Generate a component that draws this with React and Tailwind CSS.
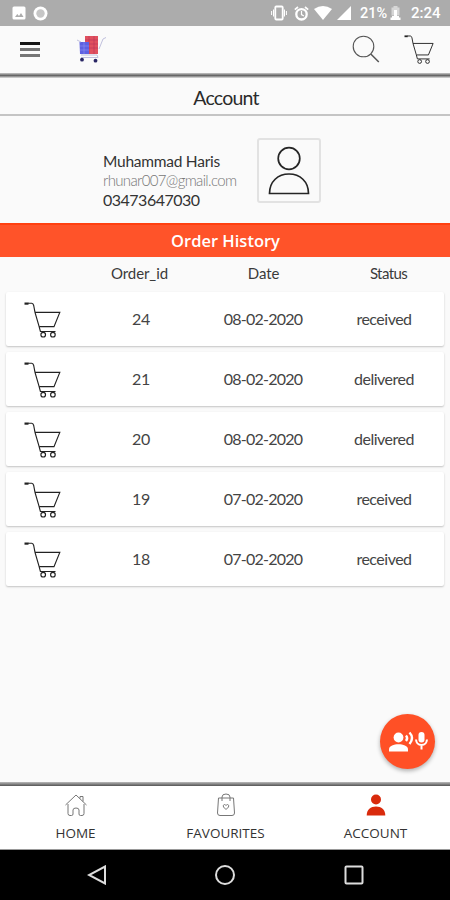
const orders = [
  { id: '24', date: '08-02-2020', status: 'received' },
  { id: '21', date: '08-02-2020', status: 'delivered' },
  { id: '20', date: '08-02-2020', status: 'delivered' },
  { id: '19', date: '07-02-2020', status: 'received' },
  { id: '18', date: '07-02-2020', status: 'received' },
]

function CartIcon({ className }) {
  return (
    <svg viewBox="0 0 38 37" className={className} fill="none" stroke="#222" strokeWidth="1.15">
      <path d="M.5 1.6h4" strokeWidth="2.200" />
      <path d="M4 1.200h3.700q1.500.2 2 2.300l1.300 6.900 4 13.800 1.400 5.300H31.500" />
      <path d="M11 10.400h24.800l-5.800 14.200H15.200" />
      <circle cx="19.200" cy="32.700" r="2.300" />
      <circle cx="28.900" cy="32.700" r="2.300" />
    </svg>
  )
}

function StatusBar() {
  return (
    <div className="h-[26px] bg-[#acacac] flex items-center text-white font-['Roboto',sans-serif]">
      <svg className="w-[14px] h-[14px] ml-3" viewBox="0 0 14 14">
        <rect x=".5" y=".5" width="13" height="13" rx="1.5" fill="#fff" />
        <path d="M3 11l2.3-3 1.7 2 2-3 2.5 4z" fill="#acacac" />
      </svg>
      <svg className="w-[15px] h-[15px] ml-[6.5px]" viewBox="0 0 15 15">
        <circle cx="7.5" cy="7.5" r="7" fill="#fff" />
        <circle cx="7.5" cy="7.5" r="4.2" fill="#c6c6c6" />
      </svg>
      <svg className="w-4 h-4 ml-auto" viewBox="0 0 16 16" fill="none" stroke="#fff" strokeWidth="1.4">
        <rect x="4.3" y="1.5" width="7.4" height="13" rx="1" strokeWidth="1.8" />
        <path d="M2.5 4.5v7M.6 6v4M13.5 4.5v7M15.4 6v4" strokeWidth="1" />
      </svg>
      <svg className="w-[15px] h-[15px] ml-[7px]" viewBox="0 0 15 15" fill="none" stroke="#fff">
        <circle cx="7.5" cy="8.3" r="5.2" strokeWidth="2.3" />
        <path d="M.8 3.6L4 1M14.2 3.6L11 1" strokeWidth="1.7" />
        <path d="M7.5 5v3.6l2.4 1.4" strokeWidth="1.2" />
      </svg>
      <svg className="w-[18px] h-[14px] ml-[5px]" viewBox="0 0 18 14">
        <path d="M0 3Q9-2.800 18 3L9 14z" fill="#fff" />
      </svg>
      <svg className="w-[14px] h-[14px] ml-[5px]" viewBox="0 0 14 14">
        <path d="M14 0v14H0z" fill="#fff" />
      </svg>
      <span className="ml-[9px] w-[27px] text-[14.500px] font-medium leading-none pt-[2px]">21%</span>
      <svg className="w-[11px] h-[14px] ml-[3px]" viewBox="0 0 11 14">
        <path d="M3.500 0h4v1.500h2v8h-8v-8h2z" fill="#d6d6d6" />
        <path d="M.5 11.500h10V14H.5zM4 4h3v6h2v1.500H2V10h2z" fill="#fff" />
      </svg>
      <span className="ml-[10px] mr-[10px] w-[29px] text-[15px] font-medium leading-none pt-[1px]">2:24</span>
    </div>
  )
}

function ShopLogo() {
  return (
    <svg className="w-[30px] h-[28px]" viewBox="0 0 30 28">
      <path d="M8 1h13v18H8z" fill="#e0505e" />
      <path d="M8 5h13M8 9h13M8 13h13M12 1v18M17 1v18" stroke="#b93358" strokeWidth=".6" />
      <path d="M2.500 7h9.500v12H3z" fill="#5d60e2" />
      <path d="M3 11h9M3 15h9M7 7v12" stroke="#8f92f4" strokeWidth=".6" />
      <path d="M0 5l4 2M22 14l4-10 3-1.500M4 20h16l1 2.500H4" fill="none" stroke="#c0c0dd" strokeWidth="1" />
      <circle cx="5" cy="24.700" r="1.900" fill="#292665" />
      <circle cx="18.500" cy="25.700" r="1.900" fill="#292665" />
    </svg>
  )
}

function AppBar() {
  return (
    <header className="h-[47px] bg-[#fafafa] flex items-center">
      <div className="ml-5 w-5 flex flex-col gap-[3px]">
        <div className="h-[3px] bg-[#161616]" />
        <div className="h-[3px] bg-[#757575]" />
        <div className="h-[3px] bg-[#757575]" />
      </div>
      <div className="ml-[37px] pb-[2px]">
        <ShopLogo />
      </div>
      <svg className="w-7 h-7 ml-auto mb-[2px]" viewBox="0 0 28 28" fill="none" stroke="#555" strokeWidth="1.1">
        <circle cx="11.500" cy="11.500" r="10.300" />
        <path d="M18.800 19l8 8" strokeWidth="1.500" />
      </svg>
      <CartIcon className="w-[31px] h-[30px] ml-[24px] mr-[15px]" />
    </header>
  )
}

function Profile() {
  return (
    <section className="h-[107px] flex items-start">
      <div className="ml-[103px] mt-[35px] w-[154px] text-[#333] whitespace-nowrap">
        <p className="text-[15.500px] leading-5 tracking-[-0.25px]">Muhammad Haris</p>
        <p className="text-[15px] leading-[19px] tracking-[-0.65px] text-[#777] font-light">rhunar007@gmail.com</p>
        <p className="text-[16px] leading-5 tracking-[-0.5px]">03473647030</p>
      </div>
      <div className="mt-[22px] w-16 h-[65px] border-2 border-[#e2e2e2] rounded-[3px] flex items-center justify-center">
        <svg className="w-[42px] h-[50px]" viewBox="0 0 42 50" fill="none" stroke="#252525" strokeWidth="1.700">
          <circle cx="21" cy="12.500" r="10.800" />
          <path d="M1.500 47.500C1.500 35.500 10 28 21 28s19.500 7.500 19.500 19.500z" />
        </svg>
      </div>
    </section>
  )
}

function OrderRow({ order }) {
  return (
    <div className="h-[54px] bg-white rounded-[2px] shadow-[0_1px_2px_rgba(0,0,0,0.22)] grid grid-cols-[74px_122px_122px_120px] items-center text-center text-[16px] text-[#444]">
      <CartIcon className="w-[38px] h-[37px] ml-[18px] mt-[2px]" />
      <span className="tracking-[-0.4px]">{order.id}</span>
      <span className="tracking-[-0.75px]">{order.date}</span>
      <span className="tracking-[-0.5px]">{order.status}</span>
    </div>
  )
}

function BottomNav() {
  return (
    <nav className="h-[64px] bg-white border-b border-[#999] grid grid-cols-3 text-center text-[13.500px] text-[#333] font-['Open_Sans',sans-serif]">
      <div className="flex flex-col items-center pt-2 pl-px">
        <svg className="w-[22px] h-[22px]" viewBox="0 0 22 22" fill="none" stroke="#777" strokeWidth="1">
          <path d="M.5 11L11 1l10.500 10M15 4.500V2.500h3v5M3 10v9.500q0 2 2 2h1.500q1.500 0 1.500-1.500v-4q0-2 3-2t3 2v4q0 1.500 1.500 1.500H17q2 0 2-2V10" />
        </svg>
        <span className="leading-5 mt-[7px]">HOME</span>
      </div>
      <div className="flex flex-col items-center pt-[7px] pl-px">
        <svg className="w-[20px] h-[24px]" viewBox="0 0 20 24" fill="none" stroke="#777" strokeWidth="1">
          <path d="M2.500 5h15l1 15q0 2.500-2.500 2.500H4Q1.500 22.500 1.500 20zM6 8V4q0-3 4-3t4 3v4" />
          <path d="M10 16.500l-2.500-2.500q-1-2 1-2.500 1 0 1.500 1 .5-1 1.500-1 2 .5 1 2.500z" />
        </svg>
        <span className="leading-5 mt-[6px]">FAVOURITES</span>
      </div>
      <div className="flex flex-col items-center pt-2 pl-px">
        <svg className="w-[20px] h-[22px]" viewBox="0 0 20 22" fill="#d92a0c">
          <circle cx="10" cy="5.500" r="5" />
          <path d="M.7 21.500c0-6 4-9 9.300-9s9.300 3 9.300 9z" />
        </svg>
        <span className="leading-5 mt-[7px]">ACCOUNT</span>
      </div>
    </nav>
  )
}

function VoiceButton() {
  return (
    <button className="absolute right-[15px] bottom-[13px] w-[55px] h-[55px] rounded-full bg-[#ff5026] shadow-[0_2px_4px_rgba(0,0,0,0.3)] flex items-center justify-center">
      <svg className="w-10 h-[22px]" viewBox="0 0 40 22" fill="#fff">
        <circle cx="10.500" cy="6.500" r="4.900" />
        <path d="M1 20.500v-2.200c0-3.500 5-5 9.500-5s9.500 1.500 9.500 5v2.200z" />
        <path d="M18 4.500q2.300 2.500 0 5.500M21.500 1.500q5 5.300 0 11.500" fill="none" stroke="#fff" strokeWidth="2.400" />
        <rect x="30.500" y="1" width="6" height="10.500" rx="3" />
        <path d="M28 8.500q.5 5.500 5.500 5.500t5.500-5.500M33.500 14v4.500" fill="none" stroke="#fff" strokeWidth="2" />
      </svg>
    </button>
  )
}

function App() {
  return (
    <div className="w-[450px] h-[900px] bg-[#fafafa] flex flex-col overflow-hidden font-['Lato',sans-serif]">
      <StatusBar />
      <AppBar />
      <div className="h-[5px] bg-linear-to-b from-[#c8c8c8] via-[#666] to-[#e2e2e2]" />
      <h1 className="h-[38px] border-b-2 border-[#c4c4c4] flex items-center justify-center text-[19.500px] tracking-[-0.75px] text-[#2a2a2a] pt-[3px] pl-[2px]">Account</h1>
      <Profile />
      <h2 className="h-[34px] border-t-2 border-[#ff4010] bg-[#ff5329] text-white text-[16.500px] font-semibold flex items-center justify-center pl-px font-['Open_Sans',sans-serif]">Order History</h2>
      <div className="h-[34px] pl-[6px] grid grid-cols-[73px_121px_127px_123px] text-center text-[15px] text-[#3a3a3a] leading-[32px] tracking-[-0.1px]">
        <span />
        <span>Order_id</span>
        <span>Date</span>
        <span className="tracking-[-0.6px]">Status</span>
      </div>
      <main className="relative flex-1 px-[6px] pt-[1px] flex flex-col gap-[6px]">
        {orders.map((order) => (
          <OrderRow key={order.id} order={order} />
        ))}
        <VoiceButton />
      </main>
      <div className="h-1 bg-linear-to-b from-[#bbb] to-[#555]" />
      <BottomNav />
      <footer className="h-[50px] bg-black grid grid-cols-[193px_64px_193px] items-center">
        <svg className="w-5 h-5 justify-self-center" viewBox="0 0 20 20" fill="none" stroke="#ddd" strokeWidth="2">
          <path d="M18 1.500v17L2 10z" />
        </svg>
        <svg className="w-[22px] h-[22px] justify-self-center" viewBox="0 0 22 22" fill="none" stroke="#ddd" strokeWidth="2">
          <circle cx="11" cy="11" r="9" />
        </svg>
        <svg className="w-5 h-5 justify-self-center" viewBox="0 0 20 20" fill="none" stroke="#ddd" strokeWidth="2">
          <rect x="1.500" y="1.500" width="17" height="17" rx="1" />
        </svg>
      </footer>
    </div>
  )
}

export default App
